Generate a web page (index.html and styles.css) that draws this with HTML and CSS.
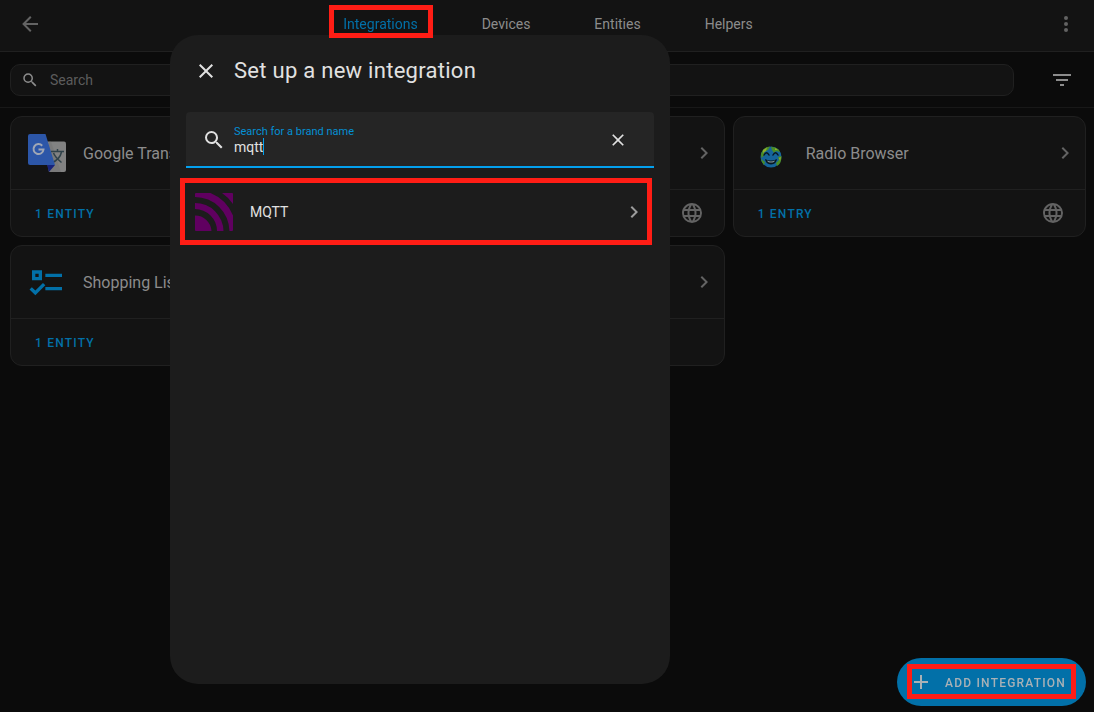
FILE: index.html
```html
<!DOCTYPE html>
<html lang="en">
<head>
<meta charset="utf-8">
<meta name="viewport" content="width=device-width, initial-scale=1">
<title>Integrations</title>
<link rel="stylesheet" href="styles.css">
</head>
<body>
<svg class="sprite" aria-hidden="true">
  <symbol id="back" viewBox="0 0 24 24"><path d="M20,11V13H8L13.5,18.5L12.08,19.92L4.16,12L12.08,4.08L13.5,5.5L8,11H20Z"/></symbol>
  <symbol id="dots" viewBox="0 0 24 24"><circle cx="12" cy="6" r="2"/><circle cx="12" cy="12" r="2"/><circle cx="12" cy="18" r="2"/></symbol>
  <symbol id="magnify" viewBox="0 0 24 24"><path d="M9.5,3A6.5,6.5 0 0,1 16,9.5C16,11.11 15.41,12.59 14.44,13.73L14.71,14H15.5L20.5,19L19,20.5L14,15.5V14.71L13.73,14.44C12.59,15.41 11.11,16 9.5,16A6.5,6.5 0 0,1 3,9.5A6.5,6.5 0 0,1 9.5,3M9.5,5C7,5 5,7 5,9.5C5,12 7,14 9.5,14C12,14 14,12 14,9.5C14,7 12,5 9.5,5Z"/></symbol>
  <symbol id="filter" viewBox="0 0 24 24"><path d="M6,13H18V11H6M3,6V8H21V6M10,18H14V16H10V18Z"/></symbol>
  <symbol id="chevron" viewBox="0 0 24 24"><path d="M8.59,16.58L13.17,12L8.59,7.41L10,6L16,12L10,18L8.59,16.58Z"/></symbol>
  <symbol id="close" viewBox="0 0 24 24"><path d="M19,6.41L17.59,5L12,10.59L6.41,5L5,6.41L10.59,12L5,17.59L6.41,19L12,13.41L17.59,19L19,17.59L13.41,12L19,6.41Z"/></symbol>
  <symbol id="plus" viewBox="0 0 24 24"><path d="M19,13H13V19H11V13H5V11H11V5H13V11H19V13Z"/></symbol>
  <symbol id="web" viewBox="0 0 24 24"><path d="M16.36,14C16.44,13.34 16.5,12.68 16.5,12C16.5,11.32 16.44,10.66 16.36,10H19.74C19.9,10.64 20,11.31 20,12C20,12.69 19.9,13.36 19.74,14M14.59,19.56C15.19,18.45 15.65,17.25 15.97,16H18.92C17.96,17.65 16.43,18.93 14.59,19.56M14.34,14H9.66C9.56,13.34 9.5,12.68 9.5,12C9.5,11.32 9.56,10.65 9.66,10H14.34C14.43,10.65 14.5,11.32 14.5,12C14.5,12.68 14.43,13.34 14.34,14M12,19.96C11.17,18.76 10.5,17.43 10.09,16H13.91C13.5,17.43 12.83,18.76 12,19.96M8,8H5.08C6.03,6.34 7.57,5.06 9.4,4.44C8.8,5.55 8.35,6.75 8,8M5.08,16H8C8.35,17.25 8.8,18.45 9.4,19.56C7.57,18.93 6.03,17.65 5.08,16M4.26,14C4.1,13.36 4,12.69 4,12C4,11.31 4.1,10.64 4.26,10H7.64C7.56,10.66 7.5,11.32 7.5,12C7.5,12.68 7.56,13.34 7.64,14M12,4.03C12.83,5.23 13.5,6.57 13.91,8H10.09C10.5,6.57 11.17,5.23 12,4.03M18.92,8H15.97C15.65,6.75 15.19,5.55 14.59,4.44C16.43,5.07 17.96,6.34 18.92,8M12,2C6.47,2 2,6.5 2,12A10,10 0 0,0 12,22A10,10 0 0,0 22,12A10,10 0 0,0 12,2Z"/></symbol>
  <symbol id="checklist" viewBox="0 0 24 24"><path d="M3,5H9V11H3V5M5,7V9H7V7H5M11,7H21V9H11V7M11,15H21V17H11V15M5,20L1.5,16.5L2.91,15.09L5,17.17L9.59,12.59L11,14L5,20Z"/></symbol>
</svg>

<header class="header">
  <button class="icon-button" aria-label="Back"><svg class="icon"><use href="#back"/></svg></button>
  <nav class="tabs">
    <a class="tab tab-active marked" href="#integrations">Integrations</a>
    <a class="tab" href="#devices">Devices</a>
    <a class="tab" href="#entities">Entities</a>
    <a class="tab" href="#helpers">Helpers</a>
  </nav>
  <button class="icon-button header-menu" aria-label="Menu"><svg class="icon"><use href="#dots"/></svg></button>
</header>

<div class="toolbar">
  <label class="search">
    <svg class="icon icon-small"><use href="#magnify"/></svg>
    <input class="search-input" type="search" placeholder="Search" aria-label="Search">
  </label>
  <button class="icon-button filter" aria-label="Filter"><svg class="icon"><use href="#filter"/></svg></button>
</div>

<main class="grid">
  <article class="card">
    <div class="card-head">
      <svg class="brand" viewBox="0 0 40 40">
        <path fill="#828282" d="M16 8.5H37Q39 8.500 39 10.500V37Q39 39 37 39H22Z"/>
        <path fill="#6d6d6d" d="M22 8.500H24L34 39H22Z" opacity=".35"/>
        <path fill="none" stroke="#30424a" stroke-width="1.500" d="M24 18.500H37M30.500 16V18.500M34.500 19C33.500 24 29 28 24.500 30M26.500 20C28 24 31.500 27 34.500 29.500"/>
        <path fill="#17237b" d="M20 32H28L22 39Z"/>
        <path fill="#2c56a8" d="M3 1H18.500L28 32H3Q1 32 1 30V3Q1 1 3 1Z"/>
        <path fill="none" stroke="#a0a7b5" stroke-width="2" d="M15.200 12.700A5 5 0 1 0 16.500 16.500H11.500"/>
      </svg>
      <span class="card-name">Google Translate</span>
      <svg class="icon"><use href="#chevron"/></svg>
    </div>
    <div class="card-foot"><button class="card-action">1 ENTITY</button></div>
  </article>
  <article class="card">
    <div class="card-head"><svg class="icon"><use href="#chevron"/></svg></div>
    <div class="card-foot"><svg class="icon"><use href="#web"/></svg></div>
  </article>
  <article class="card">
    <div class="card-head">
      <svg class="brand" viewBox="0 0 40 40">
        <circle cx="21" cy="24" r="10.500" fill="#16649a"/>
        <g transform="translate(0 1)">
          <path fill="#4b8c25" d="M11 20Q13 13 20 12.500L18 16L14 18L14.500 21L11.500 24ZM21 12.700Q28 13 30 18L26 17L24 19L22 16ZM31.300 22Q32 29 27 32L26 29L29 26L28 23ZM11 25L15 28L14 31Q11.500 28 11 25Z"/>
          <path fill="#8fae2d" d="M13 16L17 13.500L16 17L13 19ZM25 14L28 16L25 16ZM29 24L31 23L30 27Z"/>
          <path fill="none" stroke="#071722" stroke-width="1.500" stroke-linecap="round" d="M14 21Q16.500 16.500 19 21M23 21Q25.500 16.500 28 21"/>
          <path fill="#071722" d="M15 25Q21 28 27 25Q26.500 30 21 30.500Q15.500 30 15 25Z"/>
          <path fill="#8a9a9f" d="M17 26.500Q21 28.500 25 26.500L24 28Q21 29 18 28Z"/>
        </g>
      </svg>
      <span class="card-name">Radio Browser</span>
      <svg class="icon"><use href="#chevron"/></svg>
    </div>
    <div class="card-foot"><button class="card-action">1 ENTRY</button><svg class="icon"><use href="#web"/></svg></div>
  </article>
  <article class="card">
    <div class="card-head">
      <svg class="brand brand-blue"><use href="#checklist"/></svg>
      <span class="card-name">Shopping List</span>
      <svg class="icon"><use href="#chevron"/></svg>
    </div>
    <div class="card-foot"><button class="card-action">1 ENTITY</button></div>
  </article>
  <article class="card">
    <div class="card-head"><svg class="icon"><use href="#chevron"/></svg></div>
    <div class="card-foot"></div>
  </article>
</main>

<button class="fab marked"><svg class="icon"><use href="#plus"/></svg><span class="fab-label">ADD INTEGRATION</span></button>

<div class="overlay">
  <section class="dialog" role="dialog" aria-labelledby="dialog-title">
    <div class="dialog-head">
      <button class="icon-button" aria-label="Close"><svg class="icon"><use href="#close"/></svg></button>
      <h1 class="dialog-title" id="dialog-title">Set up a new integration</h1>
    </div>
    <div class="field">
      <svg class="icon"><use href="#magnify"/></svg>
      <div class="field-body">
        <label class="field-label" for="brand">Search for a brand name</label>
        <div class="field-line"><input class="field-input" id="brand" type="text" value="mqtt" size="4"><span class="caret"></span></div>
      </div>
      <button class="icon-button" aria-label="Clear"><svg class="icon icon-clear"><use href="#close"/></svg></button>
    </div>
    <button class="result marked">
      <svg class="brand" viewBox="0 0 40 40">
        <g fill="#600060">
          <path d="M1 23.500A16.500 16.500 0 0 1 17.500 39H2Q1 39 1 38Z"/>
          <path d="M1 11A28.500 28.500 0 0 1 29.500 39H23A22 22 0 0 0 1 17Z"/>
          <path d="M2 1H16.500A41 41 0 0 1 39 23.500V38Q39 39 38 39H35.500A34.500 34.500 0 0 0 1 5V2Q1 1 2 1Z"/>
          <path d="M28 1H38Q39 1 39 2V12A42 42 0 0 0 28 1Z"/>
        </g>
      </svg>
      <span class="result-name">MQTT</span>
      <svg class="icon icon-muted"><use href="#chevron"/></svg>
    </button>
  </section>
</div>
</body>
</html>
```

FILE: styles.css
```css
* {
  box-sizing: border-box;
}

body {
  margin: 0;
  min-height: 100vh;
  overflow: hidden;
  background: #0b0b0b;
  color: #8c8c8c;
  font-family: Roboto, "Liberation Sans", sans-serif;
  font-size: 14px;
  line-height: 20px;
}

button,
input {
  margin: 0;
  padding: 0;
  border: 0;
  outline: 0;
  background: none;
  color: inherit;
  font: inherit;
}

.sprite {
  display: none;
}

.icon {
  display: block;
  flex: none;
  width: 24px;
  height: 24px;
  fill: currentColor;
}

.icon-small {
  width: 18px;
  height: 18px;
  color: #8c8c8c;
}

.icon-clear {
  width: 20px;
  height: 20px;
}

.icon-muted {
  color: #9b9b9b;
}

.icon-button {
  display: flex;
  flex: none;
}

/* Red call-out frame around a control */
.marked::after {
  content: "";
  position: absolute;
  border: 5px solid #ff1d15;
}

.header {
  display: grid;
  grid-template-columns: 1fr auto 1fr;
  align-items: center;
  height: 52px;
  padding: 0 16px 4px 18px;
  border-bottom: 1px solid #202020;
  background: #131313;
  color: #636363;
}

.header-menu {
  justify-self: end;
}

.tabs {
  display: flex;
}

.tab {
  position: relative;
  padding: 0 32px;
  color: #8c8c8c;
  text-decoration: none;
}

.tab-active {
  z-index: 3;
  color: #0270a8;
}

.tab-active::after {
  inset: -9px 17px -4px 18px;
}

.toolbar {
  display: flex;
  align-items: center;
  gap: 36px;
  height: 56px;
  padding: 0 20px 0 10px;
  border-bottom: 1px solid #181818;
}

.search {
  display: flex;
  flex: 1;
  align-items: center;
  gap: 11px;
  height: 32px;
  padding: 0 10px;
  border: 1px solid #202020;
  border-radius: 10px;
  background: #131313;
}

.search-input {
  flex: 1;
  min-width: 0;
}

.search-input::placeholder {
  color: #5c5c5c;
  opacity: 1;
}

.filter {
  color: #8c8c8c;
}

.grid {
  display: grid;
  grid-template-columns: repeat(3, 1fr);
  gap: 8px;
  padding: 8px 8px 8px 10px;
}

.card {
  border: 1px solid #202020;
  border-radius: 12px;
  background: #131313;
}

.card-head {
  display: flex;
  align-items: center;
  gap: 16px;
  height: 73px;
  padding: 0 8px 0 16px;
  border-bottom: 1px solid #202020;
}

.card-head .icon,
.card-foot .icon {
  margin-left: auto;
  color: #636363;
}

.brand {
  flex: none;
  width: 40px;
  height: 40px;
}

.brand-blue {
  fill: #0270a8;
}

.card-name {
  padding-top: 2px;
  font-size: 16px;
  line-height: 24px;
}

.card-foot {
  display: flex;
  align-items: center;
  height: 46px;
  padding: 0 20px 0 24px;
}

.card-action,
.fab-label {
  padding-top: 2px;
  font-size: 12px;
  font-weight: 500;
  letter-spacing: 0.1em;
}

.card-action {
  color: #0270a8;
}

.fab {
  position: fixed;
  right: 8px;
  bottom: 6px;
  display: flex;
  align-items: center;
  gap: 12px;
  height: 48px;
  padding: 0 20px 0 12px;
  border-radius: 24px;
  background: #0270a8;
  color: #a9b1b6;
}

.fab::after {
  inset: 6px 10px 7px;
}

.overlay {
  position: fixed;
  inset: 0 0 0 -254px;
  z-index: 2;
  display: flex;
  justify-content: center;
  padding: 35px 0 28px;
}

.dialog {
  width: 500px;
  border-radius: 28px;
  background: #1c1c1c;
  color: #e1e1e1;
}

.dialog-head {
  display: flex;
  align-items: center;
  gap: 16px;
  padding: 20px 24px 25px;
}

.dialog-title {
  margin: 0;
  font-size: 22px;
  font-weight: 400;
  letter-spacing: 0.0125em;
  line-height: 32px;
}

.field {
  display: flex;
  align-items: center;
  gap: 8px;
  height: 56px;
  margin: 0 16px;
  padding: 2px 26px 0 16px;
  border-bottom: 2px solid #03a0ee;
  border-radius: 4px 4px 0 0;
  background: #252525;
}

.field-body {
  flex: 1;
}

.field-label {
  display: block;
  padding-top: 2px;
  color: #0490d4;
  font-size: 11px;
  line-height: 12px;
}

.field-line {
  display: flex;
}

.field-input {
  field-sizing: content;
  height: 18px;
  line-height: 18px;
}

.caret {
  width: 1px;
  height: 17px;
  background: #03a0ee;
}

.result {
  position: relative;
  display: flex;
  align-items: center;
  gap: 16px;
  width: 100%;
  height: 56px;
  margin-top: 16px;
  padding: 0 24px;
  text-align: left;
}

.result::after {
  inset: -6px 18px -5px 10px;
}

.result-name {
  flex: 1;
}
```
